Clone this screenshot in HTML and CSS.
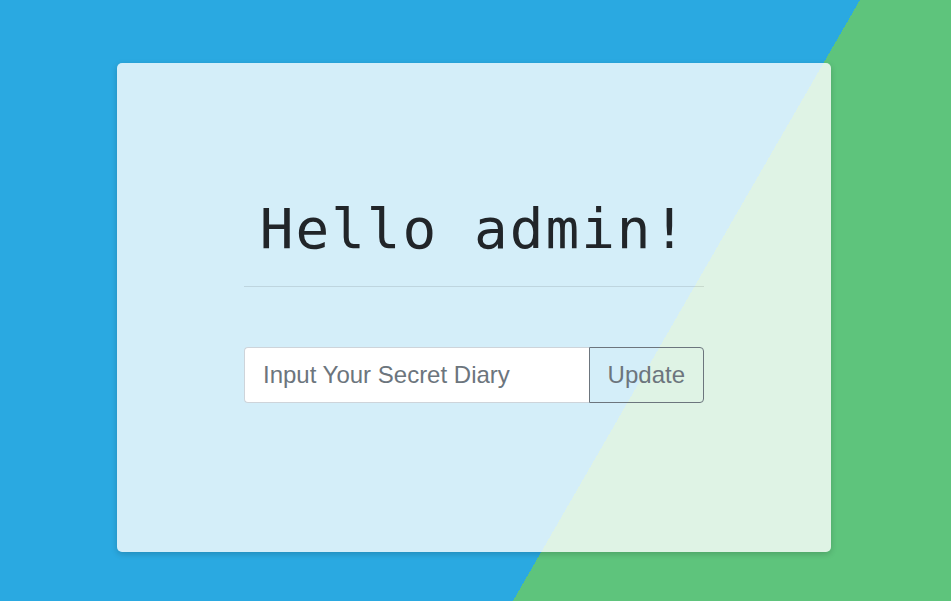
FILE: index.html
```html
<!DOCTYPE html>
<html lang="en">
<head>
<meta charset="utf-8">
<title>Secret Diary</title>
<link rel="stylesheet" href="styles.css">
</head>
<body>
<main class="page">
  <section class="card">
    <div class="content">
      <h1 class="title">Hello admin!</h1>
      <hr class="divider">
      <form class="input-group" onsubmit="return false">
        <input class="field" type="text" placeholder="Input Your Secret Diary">
        <button class="btn" type="submit">Update</button>
      </form>
    </div>
  </section>
</main>
</body>
</html>
```
FILE: styles.css
```css
* { box-sizing: border-box; }
html, body { margin: 0; height: 100%; }
body {
  font-family: "Liberation Sans", Arial, sans-serif;
  background: linear-gradient(120deg, #2aa9e1 66.25%, #5ec47c 66.25%);
  overflow: hidden;
}
.page {
  display: flex;
  justify-content: center;
  padding: 63px 3px 0 0;
}
.card {
  width: 714px;
  height: 489px;
  background: rgba(255, 255, 255, 0.8);
  border-radius: 5px;
  box-shadow: 0 2px 6px rgba(0, 0, 0, 0.18);
  display: flex;
  justify-content: center;
}
.content {
  width: 460px;
  padding-top: 132px;
}
.title {
  margin: 0;
  font-family: "DejaVu Sans Mono", monospace;
  font-weight: 400;
  font-size: 56px;
  line-height: 1.2;
  letter-spacing: 2px;
  color: #212529;
  text-align: center;
}
.divider {
  margin: 24px 0 0;
  border: 0;
  border-top: 1px solid rgba(0, 0, 0, 0.1);
}
.input-group {
  display: flex;
  margin-top: 60px;
}
.field {
  flex: 1;
  min-width: 0;
  height: 56px;
  padding: 9px 18px;
  font-family: "Liberation Sans", Arial, sans-serif;
  font-size: 24px;
  color: #495057;
  background: #fff;
  border: 1px solid #ced4da;
  border-right: 0;
  border-radius: 4px 0 0 4px;
  outline: none;
}
.field::placeholder { color: #6c757d; opacity: 1; }
.btn {
  height: 56px;
  padding: 9px 18px;
  font-family: "Liberation Sans", Arial, sans-serif;
  font-size: 24px;
  color: #6c757d;
  background: transparent;
  border: 1px solid #6c757d;
  border-radius: 0 4px 4px 0;
}
```
